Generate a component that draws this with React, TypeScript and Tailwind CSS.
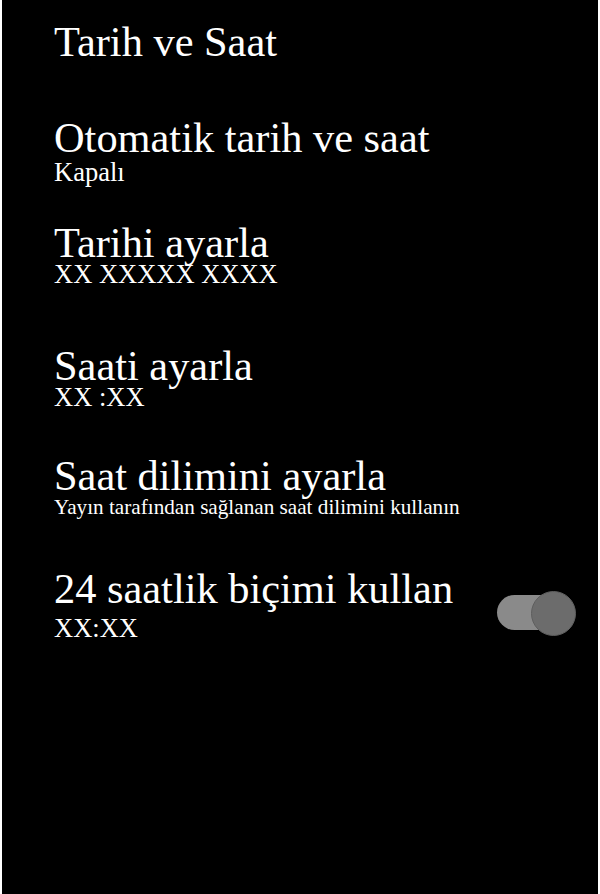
import React from "react";

function Toggle() {
  return (
    <div className="relative w-[79px] h-[45px] shrink-0">
      <div className="absolute left-0 top-[4px] w-[64px] h-[35px] rounded-full bg-[#8a8a8a]" />
      <div className="absolute right-0 top-0 w-[45px] h-[45px] rounded-full bg-[#6c6c6c] border border-[#5e5e5e]" />
    </div>
  );
}

export default function App() {
  return (
    <div className="w-full min-h-[894px] bg-white">
      <div
        className="ml-[2px] w-[596px] min-h-[894px] bg-black text-white pl-[52px] pr-[22px] pt-[21px]"
        style={{ fontFamily: '"Liberation Serif", "Times New Roman", serif' }}
      >
        {/* Header */}
        <h1 className="text-[42.4px] leading-[42px] font-normal">Tarih ve Saat</h1>

        {/* Otomatik */}
        <div className="mt-[56px]">
          <div className="text-[42.4px] leading-[38px]">Otomatik tarih ve saat</div>
          <div className="text-[26.5px] leading-[24px] mt-[3px]">Kapalı</div>
        </div>

        {/* Tarih */}
        <div className="mt-[40px]">
          <div className="text-[42.4px] leading-[38px]">Tarihi ayarla</div>
          <div className="text-[26.5px] leading-[24px]">XX XXXXX XXXX</div>
        </div>

        {/* Saat */}
        <div className="mt-[61px]">
          <div className="text-[42.4px] leading-[38px]">Saati ayarla</div>
          <div className="text-[26.5px] leading-[24px]">XX :XX</div>
        </div>

        {/* Saat dilimi */}
        <div className="mt-[48px]">
          <div className="text-[42.4px] leading-[38px]">Saat dilimini ayarla</div>
          <div className="text-[21.2px] leading-[21px] mt-[2px]">Yayın tarafından sağlanan saat dilimini kullanın</div>
        </div>

        {/* 24 saat */}
        <div className="mt-[52px] flex items-start justify-between">
          <div>
            <div className="text-[42.4px] leading-[38px]">24 saatlik biçimi kullan</div>
            <div className="text-[26.5px] leading-[24px] mt-[8px]">XX:XX</div>
          </div>
          <div className="mt-[21px]">
            <Toggle />
          </div>
        </div>
      </div>
    </div>
  );
}
